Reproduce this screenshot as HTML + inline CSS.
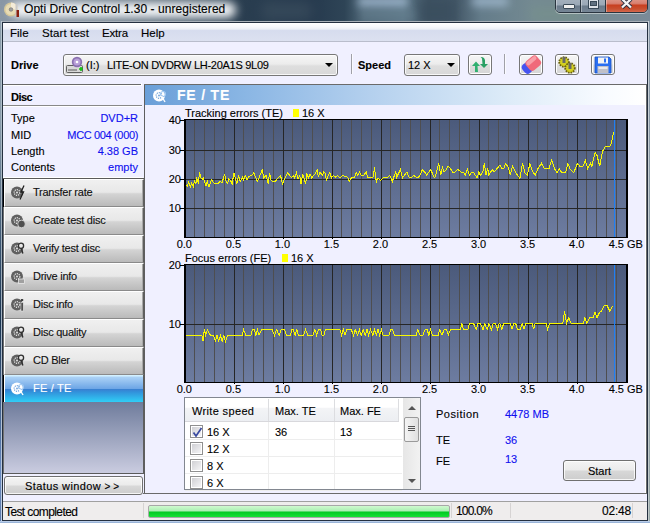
<!DOCTYPE html>
<html><head><meta charset="utf-8">
<style>
*{margin:0;padding:0;box-sizing:border-box}
body{width:650px;height:523px;overflow:hidden;position:relative;background:#56687a;font-family:"Liberation Sans",sans-serif;font-size:11px;color:#000}
.a{position:absolute}
.t{position:absolute;white-space:pre;line-height:12px;font-size:11px;-webkit-text-stroke:0.12px currentColor}
.c{text-align:center}
.r{text-align:right}
.b{font-weight:bold}
.blue{color:#1010f0}
.lbtn{position:absolute;left:4px;width:140px;height:28px;background:linear-gradient(#f0f0f0 0,#e8e8e8 47%,#d4d4d4 53%,#bababa 100%);border-left:1px solid #fff;border-top:1px solid #fff;border-bottom:1px solid #8a8a8a;border-right:1px solid #5e5e5e;box-shadow:inset -1px 0 0 #a8a8a8}
.tb{position:absolute;top:54px;width:24px;height:21px;border:1px solid #777;border-radius:3px;background:linear-gradient(#f6f6f6,#ececec 45%,#dedede 55%,#d6d6d6);box-shadow:inset 0 0 0 1px #fff}
.combo{position:absolute;top:54px;height:22px;border:1px solid #777;border-radius:3px;background:linear-gradient(#f6f6f6,#ececec 45%,#dedede 55%,#d8d8d8);box-shadow:inset 0 0 0 1px rgba(255,255,255,.8)}
.arrow{position:absolute;width:0;height:0;border-left:4px solid transparent;border-right:4px solid transparent;border-top:4px solid #000}
</style></head><body>
<!-- glass title bar -->
<div class="a" style="left:0;top:0;width:650px;height:23px;overflow:hidden;background:linear-gradient(90deg,#8a98a6 0,#7d8c9a 3%,#4a5c6c 28%,#2a3e50 36%,#263a4e 48%,#2e4456 53%,#4e6676 56%,#5a7484 62%,#3e5262 66%,#425666 70%,#647c8a 74%,#748a92 82%,#748a90 88%,#7a8a98 100%)">
 <div class="a" style="left:262px;top:2px;width:50px;height:18px;background:#3e5060;filter:blur(6px);opacity:.6"></div>
 <div class="a" style="left:358px;top:-3px;width:50px;height:10px;background:#a8c0d8;filter:blur(4px);opacity:.8"></div><div class="a" style="left:360px;top:10px;width:55px;height:10px;background:#6a8494;filter:blur(4px);opacity:.6"></div>
 <div class="a" style="left:420px;top:0;width:34px;height:23px;background:#3a4e5e;filter:blur(5px);opacity:.8"></div>
 <div class="a" style="left:472px;top:-3px;width:36px;height:9px;background:#b0c8e0;filter:blur(4px);opacity:.7"></div>
 <div class="a" style="left:530px;top:8px;width:50px;height:12px;background:#7a9a84;filter:blur(6px);opacity:.35"></div>
</div>
<div class="a" style="left:10px;top:2px;width:226px;height:16px;background:#f2f4f6;border-radius:8px;filter:blur(5px);opacity:1"></div>
<div class="t" style="left:24px;top:3px;font-size:12px;line-height:13px;color:#000;letter-spacing:0.05px">Opti Drive Control 1.30 - unregistered</div>
<!-- title icon -->
<svg class="a" style="left:2px;top:1px" width="18" height="17">
 <circle cx="9" cy="8.5" r="7" fill="#d6c89a"/>
 <circle cx="9" cy="8.5" r="5.5" fill="#e8dcb4"/>
 <path d="M9 1.5 A7 7 0 0 1 16 8.5 L9 8.5Z" fill="#f4ecd8"/>
 <circle cx="9" cy="8.5" r="1.8" fill="#a0a0a0" stroke="#707070" stroke-width="0.6"/>
 <rect x="13.5" y="3" width="2" height="12" fill="#c8c8c8"/>
 <rect x="14.5" y="9" width="2.5" height="7" fill="#8a2010"/>
</svg>
<!-- caption buttons -->
<div class="a" style="left:555px;top:-4px;width:93px;height:17px;border:1px solid #2a3540;border-radius:0 0 5px 5px;overflow:hidden;box-shadow:0 1px 0 0 rgba(255,255,255,.45)">
  <div class="a" style="left:0;top:0;width:25px;height:16px;background:linear-gradient(#a8b4c0,#9aa8b6 50%,#6a7a8a 56%,#788898);border-right:1px solid #2a3540;box-shadow:inset 1px 1px 0 rgba(255,255,255,.35)"></div>
  <div class="a" style="left:25px;top:0;width:25px;height:16px;background:linear-gradient(#a8b4c0,#9aa8b6 50%,#6a7a8a 56%,#788898);border-right:1px solid #2a3540;box-shadow:inset 1px 1px 0 rgba(255,255,255,.35)"></div>
  <div class="a" style="left:50px;top:0;width:43px;height:16px;background:linear-gradient(#e0a090,#d88070 40%,#c84020 52%,#c85030 75%,#d87058);box-shadow:inset 1px 1px 0 rgba(255,255,255,.35)"></div>
  <div class="a" style="left:7px;top:7px;width:12px;height:5px;background:#f0f0f0;border:1px solid #3a4a58;border-radius:1px"></div>
  <div class="a" style="left:32px;top:1px;width:11px;height:11px;background:#dde2e8;border:1px solid #3a4a58"></div>
  <div class="a" style="left:34px;top:4px;width:7px;height:5px;background:#607080;border:1px solid #3a4a58"></div>
</div>
<svg class="a" style="left:619px;top:-2px" width="15" height="12"><path d="M3 1 L12 9.5 M12 1 L3 9.5" stroke="#2a3040" stroke-width="4"/><path d="M3 1 L12 9.5 M12 1 L3 9.5" stroke="#f4f4f4" stroke-width="2.3"/></svg>
<!-- window frame -->
<div class="a" style="left:0;top:21px;width:1px;height:502px;background:linear-gradient(#8a9caa 0,#8a9cac 20%,#3a5470 45%,#1a3450 60%,#4a6a98 80%,#6a8ac0 90%,#5a78a8 100%)"></div>
<div class="a" style="left:1px;top:21px;width:1px;height:502px;background:linear-gradient(#b8c6d0,#9aaab8 50%,#c0d0e8 100%)"></div>
<div class="a" style="left:648px;top:21px;width:1px;height:502px;background:linear-gradient(#c8d0d8,#c0c8c8)"></div>
<div class="a" style="left:649px;top:21px;width:1px;height:502px;background:linear-gradient(#8898a8,#98a8a8)"></div>
<div class="a" style="left:0;top:521px;width:650px;height:2px;background:linear-gradient(#c8d8f0,#8aa8d0)"></div>
<div class="a" style="left:2px;top:21px;width:646px;height:1px;background:#a8b0b8"></div>
<div class="a" style="left:2px;top:22px;width:646px;height:499px;border:1px solid #243040;background:#f0f0ff"></div>
<!-- menu bar -->
<div class="a" style="left:3px;top:23px;width:644px;height:18px;background:linear-gradient(#ffffff 0,#f6f7fb 22%,#eceff6 34%,#d6dcee 42%,#dce1f0 100%)"></div>
<div class="a" style="left:3px;top:41px;width:644px;height:1px;background:#b9bdcc"></div>
<div class="t" style="left:10px;top:27px;font-size:11.5px">File</div>
<div class="t" style="left:42px;top:27px;font-size:11.5px;letter-spacing:0.1px">Start test</div>
<div class="t" style="left:102px;top:27px;font-size:11.5px;letter-spacing:-0.2px">Extra</div>
<div class="t" style="left:141px;top:27px;font-size:11.5px">Help</div>
<!-- toolbar -->
<div class="t b" style="left:11px;top:59px">Drive</div>
<div class="combo" style="left:63px;width:275px"></div>
<svg class="a" style="left:64px;top:55px" width="22" height="20">
 <rect x="2.5" y="10.5" width="16" height="7" rx="1" fill="#d8d8d8" stroke="#606060"/>
 <rect x="4" y="14" width="9" height="2" fill="#999"/>
 <circle cx="13" cy="7" r="5.2" fill="#8a70b0"/>
 <circle cx="13" cy="7" r="3.5" fill="#b8a0d8"/>
 <circle cx="13" cy="7" r="1.3" fill="#fff"/>
 <path d="M15 14 h4 M17 12 v4" stroke="#10c010" stroke-width="1.6"/>
</svg>
<div class="t" style="left:86px;top:59px">(I:)</div>
<div class="t" style="left:107px;top:59px;letter-spacing:-0.28px">LITE-ON DVDRW LH-20A1S 9L09</div>
<div class="arrow" style="left:325px;top:63px"></div>
<div class="a" style="left:351px;top:54px;width:1px;height:20px;background:#a0a0a8"></div>
<div class="a" style="left:352px;top:54px;width:1px;height:20px;background:#fafaff"></div>
<div class="t b" style="left:358px;top:59px">Speed</div>
<div class="combo" style="left:404px;width:56px"></div>
<div class="t" style="left:408px;top:59px">12 X</div>
<div class="arrow" style="left:447px;top:63px"></div>
<div class="tb" style="left:468px"></div>
<div class="a" style="left:504px;top:54px;width:1px;height:20px;background:#a0a0a8"></div>
<div class="a" style="left:505px;top:54px;width:1px;height:20px;background:#fafaff"></div>
<div class="tb" style="left:519px"></div>
<div class="tb" style="left:555px"></div>
<div class="tb" style="left:591px"></div>
<svg class="a" style="left:468px;top:54px" width="24" height="21">
 <path d="M4 12 L8 7.5 L12 12 L9.5 12 L10 18 L7 18 L7 12Z" fill="#30b070"/>
 <path d="M20 10 L16 14 L12 10 L14.5 10 L14 4.5 Q13 3.5 12.5 3.5 L14 3 Q16.5 3.5 17 6 L17 10Z" fill="#2aa064"/>
</svg>
<svg class="a" style="left:519px;top:54px" width="24" height="21">
 <g transform="rotate(-40 12 11)"><rect x="2.5" y="5.5" width="9" height="11" rx="4" fill="#4654f0"/><rect x="8" y="5" width="14" height="12" rx="3.5" fill="#f06a7a"/><rect x="9" y="6" width="12" height="4" rx="2" fill="#f8a0a8"/></g>
</svg>
<svg class="a" style="left:555px;top:54px" width="24" height="21">
 <circle cx="9" cy="8" r="4.8" fill="#d4d020" stroke="#6a6010" stroke-width="1.8" stroke-dasharray="1.6 1"/>
 <circle cx="15" cy="14" r="4.8" fill="#d4d020" stroke="#6a6010" stroke-width="1.8" stroke-dasharray="1.6 1"/>
 <rect x="7.5" y="3" width="3" height="6" fill="#686868"/><rect x="13.5" y="9" width="3" height="6" fill="#686868"/>
</svg>
<svg class="a" style="left:591px;top:54px" width="24" height="21">
 <path d="M4 3 H18 L20 5 V19 H4 Z" fill="#2a6ef0" stroke="#1a50c0" stroke-width="0.8"/>
 <rect x="7" y="3.5" width="10" height="6" fill="#f4f4f4"/><rect x="13" y="4.5" width="2" height="4" fill="#2a6ef0"/>
 <rect x="6.5" y="12" width="11" height="7" fill="#c0c0c8"/><rect x="7.5" y="13" width="9" height="2" fill="#e8e8ec"/>
</svg>
<!-- toolbar bottom line -->
<div class="a" style="left:3px;top:84px;width:138px;height:1px;background:#6a6a6a"></div><div class="a" style="left:3px;top:85px;width:139px;height:1px;background:#fff"></div><div class="a" style="left:141px;top:83px;width:1px;height:3px;background:#fff"></div>
<!-- left disc panel -->
<div class="t b" style="left:11px;top:91px;letter-spacing:-0.5px">Disc</div>
<div class="a" style="left:3px;top:105px;width:139px;height:1px;background:#888"></div>
<div class="a" style="left:3px;top:106px;width:139px;height:1px;background:#fff"></div>
<div class="t" style="left:11px;top:112px">Type</div>
<div class="t r blue" style="left:40px;width:98px;top:112px">DVD+R</div>
<div class="t" style="left:11px;top:129px">MID</div>
<div class="t r blue" style="left:40px;width:98px;top:129px;letter-spacing:-0.35px">MCC 004 (000)</div>
<div class="t" style="left:11px;top:145px">Length</div>
<div class="t r blue" style="left:40px;width:98px;top:145px">4.38 GB</div>
<div class="t" style="left:11px;top:161px">Contents</div>
<div class="t r blue" style="left:40px;width:98px;top:161px">empty</div>
<div class="a" style="left:3px;top:177px;width:140px;height:1px;background:#fff"></div>
<div class="a" style="left:3px;top:178px;width:141px;height:1px;background:#5a5a5a"></div>
<div class="a" style="left:144px;top:84px;width:1px;height:410px;background:#5e5e5e"></div>
<div class="lbtn" style="top:179px"></div>
<svg class="a" style="left:10px;top:185px" width="16" height="16"><circle cx="7" cy="7.5" r="6" fill="#606060"/><circle cx="7" cy="7.5" r="2.8" fill="none" stroke="#e0e0e0" stroke-width="1.3" stroke-dasharray="1.2 0.9"/><circle cx="7" cy="7.5" r="1" fill="#e0e0e0"/><path d="M14 0.5 L11 7 L13.5 7 L10 14.5" fill="none" stroke="#202020" stroke-width="1.3"/></svg>
<div class="t" style="left:33px;top:186px;color:#101010;letter-spacing:-0.25px">Transfer rate</div>
<div class="lbtn" style="top:207px"></div>
<svg class="a" style="left:10px;top:213px" width="16" height="16"><circle cx="7" cy="7.5" r="6" fill="#606060"/><circle cx="7" cy="7.5" r="2.8" fill="none" stroke="#e0e0e0" stroke-width="1.3" stroke-dasharray="1.2 0.9"/><circle cx="7" cy="7.5" r="1" fill="#e0e0e0"/><circle cx="11.5" cy="11" r="3.8" fill="#505050" stroke="#e0e0e0" stroke-width="0.8"/></svg>
<div class="t" style="left:33px;top:214px;color:#101010;letter-spacing:-0.25px">Create test disc</div>
<div class="lbtn" style="top:235px"></div>
<svg class="a" style="left:10px;top:241px" width="16" height="16"><circle cx="7" cy="7.5" r="6" fill="#606060"/><circle cx="7" cy="7.5" r="2.8" fill="none" stroke="#e0e0e0" stroke-width="1.3" stroke-dasharray="1.2 0.9"/><circle cx="7" cy="7.5" r="1" fill="#e0e0e0"/><circle cx="11" cy="4.8" r="2.6" fill="#e8e8e8" stroke="#303030" stroke-width="1.3"/><path d="M11.5 7.5 L12.8 12.5" stroke="#303030" stroke-width="1.4"/></svg>
<div class="t" style="left:33px;top:242px;color:#101010;letter-spacing:-0.25px">Verify test disc</div>
<div class="lbtn" style="top:263px"></div>
<svg class="a" style="left:10px;top:269px" width="16" height="16"><circle cx="7" cy="7.5" r="6" fill="#606060"/><circle cx="7" cy="7.5" r="2.8" fill="none" stroke="#e0e0e0" stroke-width="1.3" stroke-dasharray="1.2 0.9"/><circle cx="7" cy="7.5" r="1" fill="#e0e0e0"/><rect x="8.5" y="10" width="6" height="4.5" fill="#a0a0a0" stroke="#e8e8e8" stroke-width="0.8"/></svg>
<div class="t" style="left:33px;top:270px;color:#101010;letter-spacing:-0.25px">Drive info</div>
<div class="lbtn" style="top:291px"></div>
<svg class="a" style="left:10px;top:297px" width="16" height="16"><circle cx="7" cy="7.5" r="6" fill="#606060"/><circle cx="7" cy="7.5" r="2.8" fill="none" stroke="#e0e0e0" stroke-width="1.3" stroke-dasharray="1.2 0.9"/><circle cx="7" cy="7.5" r="1" fill="#e0e0e0"/><rect x="11" y="5.5" width="2.2" height="8.5" fill="#404040" stroke="#e8e8e8" stroke-width="0.6"/><rect x="11" y="2" width="2.2" height="2" fill="#404040"/></svg>
<div class="t" style="left:33px;top:298px;color:#101010;letter-spacing:-0.25px">Disc info</div>
<div class="lbtn" style="top:319px"></div>
<svg class="a" style="left:10px;top:325px" width="16" height="16"><circle cx="7" cy="7.5" r="6" fill="#606060"/><circle cx="7" cy="7.5" r="2.8" fill="none" stroke="#e0e0e0" stroke-width="1.3" stroke-dasharray="1.2 0.9"/><circle cx="7" cy="7.5" r="1" fill="#e0e0e0"/><circle cx="11" cy="4.8" r="2.6" fill="#e8e8e8" stroke="#303030" stroke-width="1.3"/><path d="M11.5 7.5 L12.8 12.5" stroke="#303030" stroke-width="1.4"/></svg>
<div class="t" style="left:33px;top:326px;color:#101010;letter-spacing:-0.25px">Disc quality</div>
<div class="lbtn" style="top:347px"></div>
<svg class="a" style="left:10px;top:353px" width="16" height="16"><circle cx="7" cy="7.5" r="6" fill="#606060"/><circle cx="7" cy="7.5" r="2.8" fill="none" stroke="#e0e0e0" stroke-width="1.3" stroke-dasharray="1.2 0.9"/><circle cx="7" cy="7.5" r="1" fill="#e0e0e0"/><circle cx="11" cy="4.8" r="2.6" fill="#e8e8e8" stroke="#303030" stroke-width="1.3"/><path d="M11.5 7.5 L12.8 12.5" stroke="#303030" stroke-width="1.4"/></svg>
<div class="t" style="left:33px;top:354px;color:#101010;letter-spacing:-0.25px">CD Bler</div>
<div class="a" style="left:3px;top:179px;width:1px;height:223px;background:#707070"></div><div class="a" style="left:3px;top:179px;width:1px;height:28px;background:#000"></div>

<div class="a" style="left:4px;top:375px;width:139px;height:27px;background:linear-gradient(#d2f0ff 0,#d2f0ff 1px,#acd2f6 2px,#6ea6e6 50%,#3a7ed0 52%,#3290da 62%,#30cef6 100%);border-left:1px solid #fff"></div>
<div class="a" style="left:3px;top:375px;width:1px;height:27px;background:#000"></div>
<svg class="a" style="left:10px;top:381px" width="16" height="16"><circle cx="7" cy="7.5" r="6" fill="#ffffff"/><circle cx="7" cy="7.5" r="2.8" fill="none" stroke="#7aa8e0" stroke-width="1.3" stroke-dasharray="1.2 0.9"/><circle cx="7" cy="7.5" r="1" fill="#7aa8e0"/><circle cx="11" cy="6" r="2.5" fill="none" stroke="#a0c8f0" stroke-width="1.2"/><path d="M9.5 8 L13 14" stroke="#ffffff" stroke-width="1.4"/></svg>

<div class="t" style="left:33px;top:382px;color:#fff;letter-spacing:0.2px">FE / TE</div>
<div class="a" style="left:3px;top:402px;width:141px;height:71px;background:linear-gradient(#6f7c9c,#cacce0);border-left:1px solid #707070"></div>
<div class="a" style="left:3px;top:473px;width:142px;height:1px;background:#5a5a5a"></div><div class="a" style="left:143px;top:375px;width:1px;height:99px;background:#5e5e5e"></div>
<div class="a" style="left:4px;top:476px;width:139px;height:19px;border:1px solid #707070;border-radius:3px;background:linear-gradient(#f4f4f4,#ebebeb 48%,#d8d8d8 52%,#cdcdcd);box-shadow:inset 0 0 0 1px rgba(255,255,255,.8)"></div>
<div class="t" style="left:25px;top:480px;letter-spacing:0.4px">Status window <span style="font-size:10px;letter-spacing:0">&gt; &gt;</span></div>
<!-- right panel -->
<div class="a" style="left:144px;top:84px;width:503px;height:1px;background:#6a6a6a"></div>
<div class="a" style="left:143px;top:493px;width:504px;height:1px;background:#6a6a6a"></div>
<div class="a" style="left:645px;top:85px;width:1px;height:408px;background:#fff"></div><div class="a" style="left:646px;top:84px;width:1px;height:410px;background:#6a6a6a"></div>
<div class="a" style="left:145px;top:85px;width:500px;height:20px;background:linear-gradient(90deg,#6a9fd8 0,#8ab6e4 20%,#b4d0ee 45%,#dcebf8 72%,#f8fbff 92%,#ffffff 100%)"></div>
<svg class="a" style="left:152px;top:88px" width="16" height="16"><circle cx="7" cy="7.5" r="6" fill="#ffffff"/><circle cx="7" cy="7.5" r="2.8" fill="none" stroke="#78a8dc" stroke-width="1.3" stroke-dasharray="1.2 0.9"/><circle cx="7" cy="7.5" r="1" fill="#78a8dc"/><circle cx="11" cy="6" r="2.5" fill="none" stroke="#a0c8f0" stroke-width="1.2"/><path d="M9.5 8 L13 14" stroke="#ffffff" stroke-width="1.4"/></svg>
<div class="t b" style="left:177px;top:88px;font-size:14px;line-height:14px;color:#fff;letter-spacing:0.8px">FE / TE</div>

<svg width="650" height="523" style="position:absolute;left:0;top:0">
<defs>
<linearGradient id="cg" x1="0" y1="0" x2="0" y2="1"><stop offset="0" stop-color="#4b5a7b"/><stop offset="1" stop-color="#6d7ca0"/></linearGradient>
</defs>
<rect x="184" y="119" width="444" height="119" fill="#000"/>
<rect x="186" y="120" width="440" height="117" fill="url(#cg)"/>
<rect x="194" y="120" width="1" height="117" fill="#4e4e50"/>
<rect x="204" y="120" width="1" height="117" fill="#4e4e50"/>
<rect x="214" y="120" width="1" height="117" fill="#4e4e50"/>
<rect x="224" y="120" width="1" height="117" fill="#4e4e50"/>
<rect x="234" y="120" width="1" height="117" fill="#262626"/>
<rect x="234" y="238" width="1" height="1" fill="#000"/>
<rect x="243" y="120" width="1" height="117" fill="#4e4e50"/>
<rect x="253" y="120" width="1" height="117" fill="#4e4e50"/>
<rect x="263" y="120" width="1" height="117" fill="#4e4e50"/>
<rect x="273" y="120" width="1" height="117" fill="#4e4e50"/>
<rect x="283" y="120" width="1" height="117" fill="#262626"/>
<rect x="283" y="238" width="1" height="1" fill="#000"/>
<rect x="292" y="120" width="1" height="117" fill="#4e4e50"/>
<rect x="302" y="120" width="1" height="117" fill="#4e4e50"/>
<rect x="312" y="120" width="1" height="117" fill="#4e4e50"/>
<rect x="322" y="120" width="1" height="117" fill="#4e4e50"/>
<rect x="332" y="120" width="1" height="117" fill="#262626"/>
<rect x="332" y="238" width="1" height="1" fill="#000"/>
<rect x="341" y="120" width="1" height="117" fill="#4e4e50"/>
<rect x="351" y="120" width="1" height="117" fill="#4e4e50"/>
<rect x="361" y="120" width="1" height="117" fill="#4e4e50"/>
<rect x="371" y="120" width="1" height="117" fill="#4e4e50"/>
<rect x="381" y="120" width="1" height="117" fill="#262626"/>
<rect x="381" y="238" width="1" height="1" fill="#000"/>
<rect x="390" y="120" width="1" height="117" fill="#4e4e50"/>
<rect x="400" y="120" width="1" height="117" fill="#4e4e50"/>
<rect x="410" y="120" width="1" height="117" fill="#4e4e50"/>
<rect x="420" y="120" width="1" height="117" fill="#4e4e50"/>
<rect x="430" y="120" width="1" height="117" fill="#262626"/>
<rect x="430" y="238" width="1" height="1" fill="#000"/>
<rect x="439" y="120" width="1" height="117" fill="#4e4e50"/>
<rect x="449" y="120" width="1" height="117" fill="#4e4e50"/>
<rect x="459" y="120" width="1" height="117" fill="#4e4e50"/>
<rect x="469" y="120" width="1" height="117" fill="#4e4e50"/>
<rect x="479" y="120" width="1" height="117" fill="#262626"/>
<rect x="479" y="238" width="1" height="1" fill="#000"/>
<rect x="488" y="120" width="1" height="117" fill="#4e4e50"/>
<rect x="498" y="120" width="1" height="117" fill="#4e4e50"/>
<rect x="508" y="120" width="1" height="117" fill="#4e4e50"/>
<rect x="518" y="120" width="1" height="117" fill="#4e4e50"/>
<rect x="528" y="120" width="1" height="117" fill="#262626"/>
<rect x="528" y="238" width="1" height="1" fill="#000"/>
<rect x="537" y="120" width="1" height="117" fill="#4e4e50"/>
<rect x="547" y="120" width="1" height="117" fill="#4e4e50"/>
<rect x="557" y="120" width="1" height="117" fill="#4e4e50"/>
<rect x="567" y="120" width="1" height="117" fill="#4e4e50"/>
<rect x="577" y="120" width="1" height="117" fill="#262626"/>
<rect x="577" y="238" width="1" height="1" fill="#000"/>
<rect x="586" y="120" width="1" height="117" fill="#4e4e50"/>
<rect x="596" y="120" width="1" height="117" fill="#4e4e50"/>
<rect x="606" y="120" width="1" height="117" fill="#4e4e50"/>
<rect x="616" y="120" width="1" height="117" fill="#4e4e50"/>
<rect x="186" y="150" width="440" height="1" fill="#262626"/>
<rect x="186" y="179" width="440" height="1" fill="#262626"/>
<rect x="186" y="208" width="440" height="1" fill="#262626"/>
<rect x="614" y="120" width="1" height="117" fill="#1e80f4"/>
<polyline points="186.0,184.7 187.4,186.4 188.7,182.2 190.4,186.9 191.6,183.0 193.3,186.4 194.5,181.3 195.8,183.8 196.7,178.8 198.4,182.2 199.7,172.0 200.9,177.9 202.3,179.6 203.5,177.9 204.3,181.3 206.0,185.5 207.4,181.3 209.0,187.2 210.2,183.0 211.6,179.6 213.1,182.2 215.3,183.8 217.8,183.8 220.4,181.3 222.1,183.0 224.6,173.7 226.0,181.3 227.7,183.8 228.8,178.8 230.5,180.5 232.2,183.8 233.9,172.8 235.6,179.6 236.8,183.8 238.5,175.4 240.2,181.3 242.4,177.1 243.6,179.6 245.3,175.4 247.0,179.6 249.2,176.2 251.7,175.4 253.7,172.8 255.9,177.9 257.3,181.3 259.3,177.1 262.2,170.0 263.9,177.9 266.1,175.4 268.1,183.8 269.5,172.8 271.2,180.5 272.8,181.3 275.4,181.3 277.9,177.9 280.5,175.4 282.5,183.8 285.0,177.9 287.6,172.8 291.0,177.1 291.7,177.1 293.4,175.4 294.7,177.9 296.4,172.8 298.1,178.8 299.8,175.4 301.0,183.8 302.7,174.5 304.4,179.6 305.6,183.8 306.9,173.7 308.6,177.9 310.0,173.7 311.7,177.9 313.7,175.4 315.4,173.7 317.1,169.5 318.4,177.1 320.1,172.0 322.2,175.4 323.8,172.0 325.5,173.7 326.4,181.3 328.1,175.4 329.8,172.8 331.5,177.9 333.2,175.4 335.7,177.1 337.7,175.4 339.9,177.9 342.5,175.4 345.0,176.2 347.5,177.1 349.2,181.3 351.3,177.9 354.3,177.9 356.3,172.8 358.0,175.4 359.7,172.0 361.1,175.4 363.6,175.4 366.2,172.0 367.8,177.1 369.5,177.9 372.9,177.9 374.6,166.9 375.5,177.9 376.6,181.3 378.0,177.9 380.5,180.5 383.1,177.9 385.6,177.9 388.2,177.1 389.8,175.4 392.4,181.3 394.1,176.2 395.8,172.0 396.7,177.1 398.4,173.7 400.4,169.5 402.6,177.9 404.3,175.4 406.8,172.0 409.4,177.9 411.1,177.9 413.6,175.4 416.2,177.1 418.7,177.1 420.4,174.5 422.4,169.5 424.6,172.0 426.8,175.4 428.8,172.0 430.9,169.5 433.1,175.4 434.8,177.9 436.5,172.0 438.7,163.2 440.7,175.4 442.4,166.9 444.1,172.0 445.8,170.3 448.3,166.1 450.5,168.6 452.5,172.0 455.1,172.0 457.3,169.5 459.3,170.3 461.0,172.0 463.5,172.0 465.2,175.4 467.4,169.5 469.5,175.4 471.2,172.8 473.2,172.0 474.9,174.5 477.1,177.9 478.8,172.0 480.5,175.4 483.0,171.2 484.4,163.2 486.0,175.4 487.7,168.6 488.9,175.4 490.6,172.0 492.3,169.5 494.0,172.0 500.0,165.2 501.8,168.9 503.7,168.9 505.5,163.4 508.3,167.1 510.2,174.5 512.6,166.2 514.8,170.8 517.5,175.4 519.9,178.2 522.5,163.4 524.9,172.6 527.3,175.4 529.9,163.4 532.3,170.8 535.1,175.4 537.8,168.9 541.5,163.4 544.3,168.9 548.9,168.9 551.7,160.2 554.5,168.9 557.2,172.6 559.4,168.9 561.8,172.6 565.5,172.6 567.9,163.4 570.1,168.9 573.8,172.6 577.5,163.4 579.7,166.2 583.1,166.2 585.3,160.2 587.7,168.9 590.5,163.4 591.9,166.2 595.1,152.3 596.9,155.1 599.7,166.2 602.5,151.4 605.2,146.8 609.8,146.8 611.7,142.2 613.5,132.0" fill="none" stroke="#f8f800" stroke-width="1" shape-rendering="crispEdges"/>
<rect x="184" y="264" width="444" height="119" fill="#000"/>
<rect x="186" y="265" width="440" height="117" fill="url(#cg)"/>
<rect x="194" y="265" width="1" height="117" fill="#4e4e50"/>
<rect x="204" y="265" width="1" height="117" fill="#4e4e50"/>
<rect x="214" y="265" width="1" height="117" fill="#4e4e50"/>
<rect x="224" y="265" width="1" height="117" fill="#4e4e50"/>
<rect x="234" y="265" width="1" height="117" fill="#262626"/>
<rect x="234" y="383" width="1" height="1" fill="#000"/>
<rect x="243" y="265" width="1" height="117" fill="#4e4e50"/>
<rect x="253" y="265" width="1" height="117" fill="#4e4e50"/>
<rect x="263" y="265" width="1" height="117" fill="#4e4e50"/>
<rect x="273" y="265" width="1" height="117" fill="#4e4e50"/>
<rect x="283" y="265" width="1" height="117" fill="#262626"/>
<rect x="283" y="383" width="1" height="1" fill="#000"/>
<rect x="292" y="265" width="1" height="117" fill="#4e4e50"/>
<rect x="302" y="265" width="1" height="117" fill="#4e4e50"/>
<rect x="312" y="265" width="1" height="117" fill="#4e4e50"/>
<rect x="322" y="265" width="1" height="117" fill="#4e4e50"/>
<rect x="332" y="265" width="1" height="117" fill="#262626"/>
<rect x="332" y="383" width="1" height="1" fill="#000"/>
<rect x="341" y="265" width="1" height="117" fill="#4e4e50"/>
<rect x="351" y="265" width="1" height="117" fill="#4e4e50"/>
<rect x="361" y="265" width="1" height="117" fill="#4e4e50"/>
<rect x="371" y="265" width="1" height="117" fill="#4e4e50"/>
<rect x="381" y="265" width="1" height="117" fill="#262626"/>
<rect x="381" y="383" width="1" height="1" fill="#000"/>
<rect x="390" y="265" width="1" height="117" fill="#4e4e50"/>
<rect x="400" y="265" width="1" height="117" fill="#4e4e50"/>
<rect x="410" y="265" width="1" height="117" fill="#4e4e50"/>
<rect x="420" y="265" width="1" height="117" fill="#4e4e50"/>
<rect x="430" y="265" width="1" height="117" fill="#262626"/>
<rect x="430" y="383" width="1" height="1" fill="#000"/>
<rect x="439" y="265" width="1" height="117" fill="#4e4e50"/>
<rect x="449" y="265" width="1" height="117" fill="#4e4e50"/>
<rect x="459" y="265" width="1" height="117" fill="#4e4e50"/>
<rect x="469" y="265" width="1" height="117" fill="#4e4e50"/>
<rect x="479" y="265" width="1" height="117" fill="#262626"/>
<rect x="479" y="383" width="1" height="1" fill="#000"/>
<rect x="488" y="265" width="1" height="117" fill="#4e4e50"/>
<rect x="498" y="265" width="1" height="117" fill="#4e4e50"/>
<rect x="508" y="265" width="1" height="117" fill="#4e4e50"/>
<rect x="518" y="265" width="1" height="117" fill="#4e4e50"/>
<rect x="528" y="265" width="1" height="117" fill="#262626"/>
<rect x="528" y="383" width="1" height="1" fill="#000"/>
<rect x="537" y="265" width="1" height="117" fill="#4e4e50"/>
<rect x="547" y="265" width="1" height="117" fill="#4e4e50"/>
<rect x="557" y="265" width="1" height="117" fill="#4e4e50"/>
<rect x="567" y="265" width="1" height="117" fill="#4e4e50"/>
<rect x="577" y="265" width="1" height="117" fill="#262626"/>
<rect x="577" y="383" width="1" height="1" fill="#000"/>
<rect x="586" y="265" width="1" height="117" fill="#4e4e50"/>
<rect x="596" y="265" width="1" height="117" fill="#4e4e50"/>
<rect x="606" y="265" width="1" height="117" fill="#4e4e50"/>
<rect x="616" y="265" width="1" height="117" fill="#4e4e50"/>
<rect x="186" y="324" width="440" height="1" fill="#262626"/>
<rect x="614" y="265" width="1" height="117" fill="#1e80f4"/>
<polyline points="185.7,335.4 201.8,335.4 203.0,341.3 204.3,329.5 205.7,335.4 207.4,329.5 209.0,332.8 210.7,335.4 213.6,335.4 215.3,341.3 217.0,335.4 218.7,341.3 220.4,335.4 222.1,341.3 223.8,335.4 225.5,341.3 227.7,335.4 228.8,335.4 242.4,335.4 243.6,329.5 245.8,335.4 250.8,335.4 252.5,329.5 254.2,329.5 255.9,335.4 257.3,329.5 259.0,335.4 261.8,329.5 272.0,329.5 274.5,335.4 276.7,329.5 279.1,335.4 281.3,329.5 284.7,329.5 286.4,335.4 290.6,335.4 291.7,329.5 293.4,329.5 295.1,335.4 296.8,329.5 298.5,335.4 303.5,335.4 305.6,329.5 307.8,335.4 312.8,335.4 314.9,329.5 316.7,335.4 318.4,329.5 320.5,329.5 322.2,335.4 323.8,335.4 325.5,329.5 339.9,329.5 341.6,335.4 343.3,329.5 345.0,335.4 346.7,329.5 349.2,329.5 351.3,329.5 353.5,335.4 355.2,329.5 357.7,335.4 359.4,329.5 361.1,335.4 363.1,329.5 365.3,335.4 367.0,329.5 368.7,335.4 370.4,329.5 372.9,335.4 374.6,329.5 376.3,335.4 378.0,329.5 379.7,335.4 381.4,329.5 383.1,335.4 389.0,335.4 390.7,329.5 392.4,329.5 394.6,335.4 395.0,335.2 416.2,335.2 417.8,329.6 420.0,335.2 422.9,335.2 425.1,329.6 427.2,329.6 428.8,335.2 430.5,329.6 432.6,335.2 438.2,335.2 439.8,329.6 442.0,335.2 444.1,329.6 446.6,329.6 448.3,335.2 450.5,329.6 451.7,329.6 460.2,329.6 461.8,323.7 463.5,329.6 467.8,329.6 469.5,323.7 473.7,323.7 476.2,329.6 477.9,323.7 480.5,323.7 483.0,329.6 484.7,323.7 487.2,329.6 488.9,323.7 491.5,329.6 493.2,323.7 495.7,323.7 497.4,329.6 499.1,323.7 500.0,323.6 501.8,329.1 503.7,323.6 510.2,323.6 512.0,329.1 513.8,323.6 515.7,323.6 517.5,329.1 520.3,329.1 522.2,323.6 524.0,329.1 525.8,323.6 532.3,323.6 533.6,329.1 535.1,323.6 546.2,323.6 547.6,329.1 549.5,323.6 562.8,323.6 564.6,311.2 566.5,323.6 568.7,317.7 571.1,323.6 583.1,323.6 584.9,317.7 586.8,323.6 589.5,317.7 593.2,317.7 595.1,312.2 596.9,317.7 599.7,312.2 601.5,311.2 604.3,305.7 607.1,305.7 609.8,311.2 612.6,305.7" fill="none" stroke="#f8f800" stroke-width="1" shape-rendering="crispEdges"/>
<rect x="180" y="120" width="4" height="1" fill="#000"/>
<rect x="180" y="150" width="4" height="1" fill="#000"/>
<rect x="180" y="179" width="4" height="1" fill="#000"/>
<rect x="180" y="208" width="4" height="1" fill="#000"/>
<rect x="180" y="265" width="4" height="1" fill="#000"/>
<rect x="180" y="324" width="4" height="1" fill="#000"/>
</svg>

<div class="t" style="left:185px;top:107px">Tracking errors (TE)</div>
<div class="a" style="left:293px;top:109px;width:6px;height:8px;background:#ffff00"></div>
<div class="t" style="left:302px;top:107px">16 X</div>
<div class="t r" style="left:151px;width:30px;top:114px">40</div>
<div class="t r" style="left:151px;width:30px;top:144px">30</div>
<div class="t r" style="left:151px;width:30px;top:173px">20</div>
<div class="t r" style="left:151px;width:30px;top:202px">10</div>
<div class="t c" style="left:154.3px;top:238px;width:60px">0.0</div>
<div class="t c" style="left:203.4px;top:238px;width:60px">0.5</div>
<div class="t c" style="left:252.4px;top:238px;width:60px">1.0</div>
<div class="t c" style="left:301.4px;top:238px;width:60px">1.5</div>
<div class="t c" style="left:350.5px;top:238px;width:60px">2.0</div>
<div class="t c" style="left:399.6px;top:238px;width:60px">2.5</div>
<div class="t c" style="left:448.6px;top:238px;width:60px">3.0</div>
<div class="t c" style="left:497.6px;top:238px;width:60px">3.5</div>
<div class="t c" style="left:546.7px;top:238px;width:60px">4.0</div>
<div class="t c" style="left:595.8px;top:238px;width:60px">4.5 GB</div>
<div class="t" style="left:185px;top:252px">Focus errors (FE)</div>
<div class="a" style="left:282px;top:254px;width:6px;height:8px;background:#ffff00"></div>
<div class="t" style="left:291px;top:252px">16 X</div>
<div class="t r" style="left:151px;width:30px;top:259px">20</div>
<div class="t r" style="left:151px;width:30px;top:318px">10</div>
<div class="t c" style="left:154.3px;top:383px;width:60px">0.0</div>
<div class="t c" style="left:203.4px;top:383px;width:60px">0.5</div>
<div class="t c" style="left:252.4px;top:383px;width:60px">1.0</div>
<div class="t c" style="left:301.4px;top:383px;width:60px">1.5</div>
<div class="t c" style="left:350.5px;top:383px;width:60px">2.0</div>
<div class="t c" style="left:399.6px;top:383px;width:60px">2.5</div>
<div class="t c" style="left:448.6px;top:383px;width:60px">3.0</div>
<div class="t c" style="left:497.6px;top:383px;width:60px">3.5</div>
<div class="t c" style="left:546.7px;top:383px;width:60px">4.0</div>
<div class="t c" style="left:595.8px;top:383px;width:60px">4.5 GB</div>
<!-- table -->
<div class="a" style="left:184px;top:397px;width:237px;height:93px;border:1px solid #828790;background:#fff"></div>
<div class="a" style="left:185px;top:398px;width:214px;height:24px;background:linear-gradient(#fff 0,#fff 40%,#f3f4f6 45%,#eceef2 100%);border-bottom:1px solid #d8d8dc"></div>
<div class="a" style="left:268px;top:399px;width:1px;height:22px;background:#dcdde0"></div>
<div class="a" style="left:334px;top:399px;width:1px;height:22px;background:#dcdde0"></div>
<div class="a" style="left:398px;top:399px;width:1px;height:22px;background:#dcdde0"></div>
<div class="t" style="left:192px;top:405px;letter-spacing:0.35px">Write speed</div>
<div class="t" style="left:275px;top:405px">Max. TE</div>
<div class="t" style="left:340px;top:405px">Max. FE</div>
<div class="a" style="left:185px;top:439px;width:217px;height:1px;background:#ededed"></div>
<div class="a" style="left:190px;top:425px;width:13px;height:13px;border:1px solid #8f8f8f;background:#fff"><div class="a" style="left:1px;top:1px;width:9px;height:9px;background:linear-gradient(135deg,#d0d0d4,#f4f4f6)"></div></div>
<div class="t" style="left:207px;top:426px">16 X</div><div class="t" style="left:275px;top:426px">36</div><div class="t" style="left:340px;top:426px">13</div>
<div class="a" style="left:185px;top:456px;width:217px;height:1px;background:#ededed"></div>
<div class="a" style="left:190px;top:442px;width:13px;height:13px;border:1px solid #8f8f8f;background:#fff"><div class="a" style="left:1px;top:1px;width:9px;height:9px;background:linear-gradient(135deg,#d0d0d4,#f4f4f6)"></div></div>
<div class="t" style="left:207px;top:443px">12 X</div><div class="t" style="left:275px;top:443px"></div><div class="t" style="left:340px;top:443px"></div>
<div class="a" style="left:185px;top:473px;width:217px;height:1px;background:#ededed"></div>
<div class="a" style="left:190px;top:459px;width:13px;height:13px;border:1px solid #8f8f8f;background:#fff"><div class="a" style="left:1px;top:1px;width:9px;height:9px;background:linear-gradient(135deg,#d0d0d4,#f4f4f6)"></div></div>
<div class="t" style="left:207px;top:460px">8 X</div><div class="t" style="left:275px;top:460px"></div><div class="t" style="left:340px;top:460px"></div>
<div class="a" style="left:185px;top:490px;width:217px;height:1px;background:#ededed"></div>
<div class="a" style="left:190px;top:476px;width:13px;height:13px;border:1px solid #8f8f8f;background:#fff"><div class="a" style="left:1px;top:1px;width:9px;height:9px;background:linear-gradient(135deg,#d0d0d4,#f4f4f6)"></div></div>
<div class="t" style="left:207px;top:477px">6 X</div><div class="t" style="left:275px;top:477px"></div><div class="t" style="left:340px;top:477px"></div>

<div class="a" style="left:268px;top:422px;width:1px;height:67px;background:#ededed"></div>
<div class="a" style="left:334px;top:422px;width:1px;height:67px;background:#ededed"></div>
<svg class="a" style="left:192px;top:427px" width="11" height="11"><path d="M1.5 5.5 L4 9 L9.5 1" fill="none" stroke="#3a4aa0" stroke-width="1.7"/></svg>
<!-- scrollbar -->
<div class="a" style="left:403px;top:398px;width:17px;height:91px;background:linear-gradient(90deg,#e6e6e6,#f2f2f2)"></div>
<div class="a" style="left:404px;top:417px;width:15px;height:25px;border:1px solid #9a9a9a;border-radius:2px;background:linear-gradient(90deg,#f4f4f4,#e0e0e0)"></div>
<div class="a" style="left:408px;top:426px;width:7px;height:1px;background:#555"></div>
<div class="a" style="left:408px;top:428px;width:7px;height:1px;background:#555"></div>
<div class="a" style="left:408px;top:430px;width:7px;height:1px;background:#555"></div>
<div class="arrow" style="left:408px;top:406px;border-top:none;border-bottom:4px solid #555;border-left-width:4px;border-right-width:4px"></div>
<div class="arrow" style="left:408px;top:479px;border-left-width:4px;border-right-width:4px;border-top-color:#555"></div>
<!-- info -->
<div class="t" style="left:436px;top:408px;letter-spacing:0.5px">Position</div>
<div class="t blue" style="left:505px;top:408px">4478 MB</div>
<div class="t" style="left:436px;top:434px">TE</div>
<div class="t blue" style="left:505px;top:434px">36</div>
<div class="t" style="left:436px;top:455px">FE</div>
<div class="t blue" style="left:505px;top:453px">13</div>
<div class="a" style="left:563px;top:460px;width:73px;height:21px;border:1px solid #707070;border-radius:3px;background:linear-gradient(#f4f4f4,#ebebeb 48%,#d8d8d8 52%,#cdcdcd);box-shadow:inset 0 0 0 1px rgba(255,255,255,.8)"></div>
<div class="t c" style="left:563px;width:73px;top:465px">Start</div>
<!-- status bar -->
<div class="a" style="left:3px;top:501px;width:644px;height:1px;background:#a0a0a0"></div>
<div class="a" style="left:3px;top:502px;width:644px;height:18px;background:#efeded"></div>
<div class="a" style="left:143px;top:503px;width:1px;height:15px;background:#d6d3d3"></div>
<div class="a" style="left:451px;top:503px;width:1px;height:15px;background:#d6d3d3"></div>
<div class="a" style="left:510px;top:503px;width:1px;height:15px;background:#d6d3d3"></div>
<div class="a" style="left:632px;top:503px;width:1px;height:15px;background:#d6d3d3"></div>
<div class="t" style="left:5px;top:506px;font-size:12px;letter-spacing:-0.6px">Test completed</div>
<div class="a" style="left:148px;top:505px;width:302px;height:13px;border:1px solid #a8a8a8;border-radius:2px;background:linear-gradient(#d0fad0 0,#a8eeb0 48%,#02c822 52%,#16e034 100%)"></div>
<div class="t" style="left:456px;top:505px;font-size:12px;letter-spacing:-0.8px">100.0%</div>
<div class="t r" style="left:560px;width:71px;top:505px;font-size:12px;letter-spacing:-0.2px">02:48</div>
</body></html>
